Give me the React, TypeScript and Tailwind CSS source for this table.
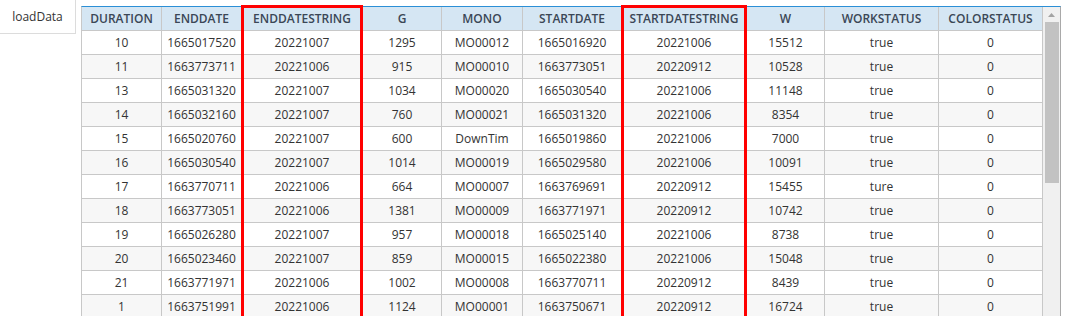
import React from "react"

const columns = [
    { key: "DURATION", w: "w-[80px]" },
    { key: "ENDDATE", w: "w-[80px]" },
    { key: "ENDDATESTRING", w: "w-[121px]" },
    { key: "G", w: "w-[79px]" },
    { key: "MONO", w: "w-[81px]" },
    { key: "STARTDATE", w: "w-[99px]" },
    { key: "STARTDATESTRING", w: "w-[125px]" },
    { key: "W", w: "w-[78px]" },
    { key: "WORKSTATUS", w: "w-[114px]" },
    { key: "COLORSTATUS", w: "w-[104px]" },
]

const rows = [
    ["10", "1665017520", "20221007", "1295", "MO00012", "1665016920", "20221006", "15512", "true", "0"],
    ["11", "1663773711", "20221006", "915", "MO00010", "1663773051", "20220912", "10528", "true", "0"],
    ["13", "1665031320", "20221007", "1034", "MO00020", "1665030540", "20221006", "11148", "true", "0"],
    ["14", "1665032160", "20221007", "760", "MO00021", "1665031320", "20221006", "8354", "true", "0"],
    ["15", "1665020760", "20221007", "600", "DownTim", "1665019860", "20221006", "7000", "true", "0"],
    ["16", "1665030540", "20221007", "1014", "MO00019", "1665029580", "20221006", "10091", "true", "0"],
    ["17", "1663770711", "20221006", "664", "MO00007", "1663769691", "20220912", "15455", "ture", "0"],
    ["18", "1663773051", "20221006", "1381", "MO00009", "1663771971", "20220912", "10742", "true", "0"],
    ["19", "1665026280", "20221007", "957", "MO00018", "1665025140", "20221006", "8738", "true", "0"],
    ["20", "1665023460", "20221007", "859", "MO00015", "1665022380", "20221006", "15048", "true", "0"],
    ["21", "1663771971", "20221006", "1002", "MO00008", "1663770711", "20220912", "8439", "true", "0"],
    ["1", "1663751991", "20221006", "1124", "MO00001", "1663750671", "20220912", "16724", "true", "0"],
]

export default function App() {
    return (
        <div className="h-[316px] w-[1067px] overflow-hidden bg-white text-[12px] text-[#333] font-['Open_Sans',sans-serif]">
            <div className="flex items-start">
                <button className="w-[76px] h-[34px] bg-white border-r border-b border-[#dcdcdc] text-[12px] text-[#333]">
                    loadData
                </button>

                <div className="relative ml-[5px] mt-[6px]">
                    <div className="flex h-[330px] overflow-hidden border-t border-t-[#2b8fd6] border-l border-l-[#c8c8c8] border-r border-r-[#a9a9a9]">
                        <table className="table-fixed border-separate border-spacing-0 w-[961px] self-start">
                            <colgroup>
                                {columns.map((c) => (
                                    <col key={c.key} className={c.w} />
                                ))}
                            </colgroup>
                            <thead>
                                <tr>
                                    {columns.map((c) => (
                                        <th key={c.key} className="h-[23px] p-0 leading-[23px] bg-[#d5e6f3] border-r border-b border-[#c8c8c8] font-semibold text-[#3b4756] text-center whitespace-nowrap">
                                            {c.key}
                                        </th>
                                    ))}
                                </tr>
                            </thead>
                            <tbody>
                                {rows.map((r, i) => (
                                    <tr key={i} className={i % 2 == 1 ? "bg-[#f7f7f7]" : "bg-white"}>
                                        {r.map((v, j) => (
                                            <td key={j} className="h-[23px] p-0 leading-[23px] border-r border-b border-[#c8c8c8] text-center whitespace-nowrap">
                                                {v}
                                            </td>
                                        ))}
                                    </tr>
                                ))}
                            </tbody>
                        </table>

                        {/* scrollbar */}
                        <div className="w-[17px] shrink-0 bg-[#f0f0f0] flex flex-col items-center">
                            <svg width="17" height="15" viewBox="0 0 17 15" className="shrink-0">
                                <polygon points="5,10 12,10 8.5,6" fill="#a3a3a3" />
                            </svg>
                            <div className="w-[14px] h-[161px] bg-[#c2c2c2]" />
                        </div>
                    </div>

                    {/* red highlight boxes */}
                    <div className="absolute left-[160px] top-[-1px] w-[122px] h-[330px] border-[3px] border-[#ff0000] pointer-events-none" />
                    <div className="absolute left-[540px] top-[-1px] w-[126px] h-[330px] border-[3px] border-[#ff0000] pointer-events-none" />
                </div>
            </div>
        </div>
    )
}
